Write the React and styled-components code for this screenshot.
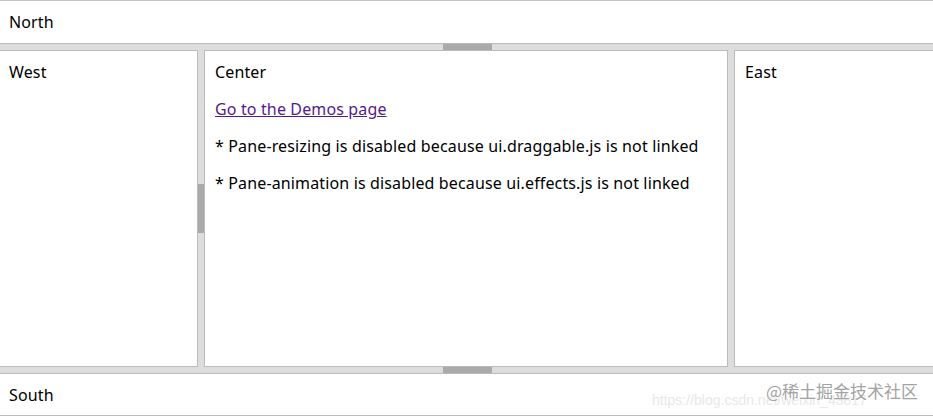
import React from 'react';
import styled, { createGlobalStyle } from 'styled-components';

const GlobalStyle = createGlobalStyle`
  html, body {
    margin: 0;
    padding: 0;
    overflow: hidden;
    background: #ffffff;
  }
  body {
    font-family: "Noto Sans", "Open Sans", Arial, sans-serif;
    font-size: 16px;
    letter-spacing: 0.14px;
    color: #000;
  }
`;

const App = () => {
  return (
    <>
      <GlobalStyle />
      <Layout>
        <Pane edge="north">North</Pane>
        <Resizer dir="h">
          <Toggler dir="h" />
        </Resizer>
        <Middle>
          <Pane edge="west">West</Pane>
          <Resizer dir="v">
            <Toggler dir="v" />
          </Resizer>
          <Pane edge="center">
            Center
            <Para>
              <DemoLink href="#">Go to the Demos page</DemoLink>
            </Para>
            <Para>* Pane-resizing is disabled because ui.draggable.js is not linked</Para>
            <Para>* Pane-animation is disabled because ui.effects.js is not linked</Para>
          </Pane>
          <Resizer dir="v" />
          <Pane edge="east">East</Pane>
        </Middle>
        <Resizer dir="h">
          <Toggler dir="h" />
        </Resizer>
        <Pane edge="south">
          South
          <Watermark>
            <WatermarkUrl>https://blog.csdn.net/weixin_43817</WatermarkUrl>
            <WatermarkTag>@稀土掘金技术社区</WatermarkTag>
          </Watermark>
        </Pane>
      </Layout>
    </>
  );
};

export default App;

const Layout = styled.div`
  display: flex;
  flex-direction: column;
  height: 416px;
  margin: 0 -2px 0 -1px;
  background: #dddddd;
`;

const Middle = styled.div`
  flex: 1;
  display: flex;
  min-height: 0;
`;

const Pane = styled.div`
  box-sizing: border-box;
  background: #ffffff;
  border: 1px solid #bbbbbb;
  padding: 10px 10px 10px 9px;
  line-height: 23px;
  position: relative;
  overflow: hidden;
  ${({ edge }) => edge === 'north' && 'height: 44px; border-top-color: #c4c4c4;'}
  ${({ edge }) => edge === 'south' && 'height: 43px;'}
  ${({ edge }) => edge === 'west' && 'width: 199px;'}
  ${({ edge }) => edge === 'center' && 'width: 524px; padding-left: 10px;'}
  ${({ edge }) => edge === 'east' && 'flex: 1; padding-left: 10px;'}
`;

const Para = styled.p`
  margin: 14px 0 0;
`;

const DemoLink = styled.a`
  color: #551a8b;
  text-decoration: underline;
`;

const Resizer = styled.div`
  flex: none;
  background: #dddddd;
  display: flex;
  align-items: center;
  justify-content: center;
  ${({ dir }) => (dir === 'h' ? 'height: 6px;' : 'width: 6px;')}
`;

const Toggler = styled.div`
  background: #aaaaaa;
  ${({ dir }) => (dir === 'h' ? 'width: 49px; height: 6px;' : 'width: 6px; height: 49px;')}
`;

const Watermark = styled.div`
  position: absolute;
  right: 16px;
  top: 6px;
  width: 266px;
  height: 30px;
  letter-spacing: 0;
`;

const WatermarkUrl = styled.span`
  position: absolute;
  left: 0;
  bottom: 2px;
  font-family: "Liberation Sans", Arial, sans-serif;
  font-size: 14px;
  line-height: 16px;
  color: #e8e8e8;
  white-space: nowrap;
`;

const WatermarkTag = styled.span`
  position: absolute;
  right: 0;
  top: 0;
  font-family: "Noto Sans CJK SC", sans-serif;
  font-size: 17px;
  line-height: 22px;
  color: #a3a3a3;
  text-shadow: 0 0 2px #fff, 0 0 1px #fff;
  white-space: nowrap;
`;
